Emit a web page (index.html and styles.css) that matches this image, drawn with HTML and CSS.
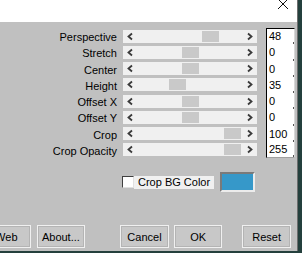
FILE: index.html
```html
<!DOCTYPE html>
<html lang="en">
<head>
    <meta charset="UTF-8">
    <title>Perspective</title>
    <link rel="stylesheet" href="styles.css">
</head>
<body>
    <div class="window">
        <div class="titlebar">
            <svg class="close" width="12" height="10" viewBox="0 0 12 10">
                <path d="M1 -1 L11 9 M11 -1 L1 9" stroke="#111" stroke-width="1" fill="none"/>
            </svg>
        </div>

        <div class="panel">
            <!-- sliders -->
            <div class="sliders">
                <label>Perspective</label>
                <div class="track">
                    <svg class="arr" viewBox="0 0 14 13"><polyline points="9,3.5 5.5,6.5 9,9.5"/></svg>
                    <div class="rail"><div class="thumb" style="margin-left:65px"></div></div>
                    <svg class="arr" viewBox="0 0 14 13"><polyline points="5,3.5 8.5,6.5 5,9.5"/></svg>
                </div>
                <div class="val first">48</div>

                <label>Stretch</label>
                <div class="track">
                    <svg class="arr" viewBox="0 0 14 13"><polyline points="9,3.5 5.5,6.5 9,9.5"/></svg>
                    <div class="rail"><div class="thumb" style="margin-left:45px"></div></div>
                    <svg class="arr" viewBox="0 0 14 13"><polyline points="5,3.5 8.5,6.5 5,9.5"/></svg>
                </div>
                <div class="val">0</div>

                <label>Center</label>
                <div class="track">
                    <svg class="arr" viewBox="0 0 14 13"><polyline points="9,3.5 5.5,6.5 9,9.5"/></svg>
                    <div class="rail"><div class="thumb" style="margin-left:45px"></div></div>
                    <svg class="arr" viewBox="0 0 14 13"><polyline points="5,3.5 8.5,6.5 5,9.5"/></svg>
                </div>
                <div class="val">0</div>

                <label>Height</label>
                <div class="track">
                    <svg class="arr" viewBox="0 0 14 13"><polyline points="9,3.5 5.5,6.5 9,9.5"/></svg>
                    <div class="rail"><div class="thumb" style="margin-left:32px"></div></div>
                    <svg class="arr" viewBox="0 0 14 13"><polyline points="5,3.5 8.5,6.5 5,9.5"/></svg>
                </div>
                <div class="val">35</div>

                <label>Offset X</label>
                <div class="track">
                    <svg class="arr" viewBox="0 0 14 13"><polyline points="9,3.5 5.5,6.5 9,9.5"/></svg>
                    <div class="rail"><div class="thumb" style="margin-left:45px"></div></div>
                    <svg class="arr" viewBox="0 0 14 13"><polyline points="5,3.5 8.5,6.5 5,9.5"/></svg>
                </div>
                <div class="val">0</div>

                <label>Offset Y</label>
                <div class="track">
                    <svg class="arr" viewBox="0 0 14 13"><polyline points="9,3.5 5.5,6.5 9,9.5"/></svg>
                    <div class="rail"><div class="thumb" style="margin-left:45px"></div></div>
                    <svg class="arr" viewBox="0 0 14 13"><polyline points="5,3.5 8.5,6.5 5,9.5"/></svg>
                </div>
                <div class="val">0</div>

                <label>Crop</label>
                <div class="track">
                    <svg class="arr" viewBox="0 0 14 13"><polyline points="9,3.5 5.5,6.5 9,9.5"/></svg>
                    <div class="rail"><div class="thumb" style="margin-left:87px"></div></div>
                    <svg class="arr" viewBox="0 0 14 13"><polyline points="5,3.5 8.5,6.5 5,9.5"/></svg>
                </div>
                <div class="val">100</div>

                <label>Crop Opacity</label>
                <div class="track">
                    <svg class="arr" viewBox="0 0 14 13"><polyline points="9,3.5 5.5,6.5 9,9.5"/></svg>
                    <div class="rail"><div class="thumb" style="margin-left:87px"></div></div>
                    <svg class="arr" viewBox="0 0 14 13"><polyline points="5,3.5 8.5,6.5 5,9.5"/></svg>
                </div>
                <div class="val last">255</div>
            </div>

            <!-- 背景色 -->
            <div class="bgrow">
                <span class="check"></span>
                <span class="check-label">Crop BG Color</span>
                <span class="swatch"></span>
            </div>

            <div class="buttons">
                <button>Web</button>
                <button>About...</button>
                <button class="cancel">Cancel</button>
                <button>OK</button>
                <button class="reset">Reset</button>
            </div>
        </div>
    </div>
</body>
</html>
```

FILE: styles.css
```css
body {
    margin: 0;
    background-color: #24403d;
    font-family: "Liberation Sans", Arial, sans-serif;
    font-size: 11px;
    color: #000;
    overflow: hidden;
}
.window {
    width: 297px;
    height: 251px;
    background-color: #c0c0c0;
    border-right: 1px solid #6e6e6e;
    overflow: hidden;
}
.titlebar {
    height: 22px;
    background-color: #fff;
    display: flex;
    justify-content: flex-end;
}
.close {
    margin-right: 8px;
}
.panel {
    padding-top: 6px;
}
.sliders {
    display: grid;
    grid-template-columns: 123px 143px 29px;
    grid-auto-rows: 16.25px;
}
.sliders label {
    text-align: right;
    padding-right: 6px;
    line-height: 16px;
    padding-top: 1px;
}
.track {
    width: 134px;
    height: 13px;
    margin-top: 1.5px;
    background-color: #f0f0f0;
    display: flex;
    align-items: center;
}
.arr {
    width: 14px;
    height: 13px;
    flex: none;
}
.arr polyline {
    fill: none;
    stroke: #3a3a3a;
    stroke-width: 1.8;
}
.rail {
    flex: 1;
    display: flex;
    height: 13px;
    align-items: center;
}
.thumb {
    width: 17px;
    height: 11px;
    background-color: #c9c9c9;
}
.val {
    background: linear-gradient(#555, #555) right bottom / 1px 2px no-repeat, #fff;
    border-left: 1px solid #000;
    border-right: 1px solid #d8d8d8;
    padding-left: 2px;
    line-height: 16px;
}
.val.first {
    border-top: 1px solid #000;
    line-height: 15px;
}
.val.last {
    border-bottom: 1px solid #a0a0a0;
    line-height: 15px;
}
.bgrow {
    display: flex;
    align-items: center;
    margin-top: 14px;
    margin-left: 122px;
    height: 20px;
}
.check {
    width: 10px;
    height: 10px;
    background-color: #fff;
    border: 1px solid #404040;
    border-right-color: #e0e0e0;
    border-bottom-color: #e0e0e0;
}
.check-label {
    box-sizing: border-box;
    width: 80px;
    padding-left: 4px;
    white-space: nowrap;
    background-color: #f0f0f0;
    line-height: 13px;
}
.swatch {
    width: 31px;
    height: 16px;
    margin-left: 6px;
    background-color: #3698c9;
    border: 2px solid #7a7a7a;
    border-right-color: #ececec;
    border-bottom-color: #ececec;
}
.buttons {
    display: flex;
    margin-top: 33px;
    margin-left: -18px;
}
.buttons button {
    width: 50px;
    height: 23px;
    margin-right: 6px;
    padding: 0;
    font-family: "Liberation Sans", Arial, sans-serif;
    font-size: 11px;
    color: #000;
    background-color: #c8c8c8;
    border: 1px solid #f0f0f0;
    box-shadow: inset 0 0 0 1px #b4b4b4;
}
.buttons .cancel {
    margin-left: 29px;
    margin-right: 5px;
}
.buttons .reset {
    margin-left: 14px;
}
```
